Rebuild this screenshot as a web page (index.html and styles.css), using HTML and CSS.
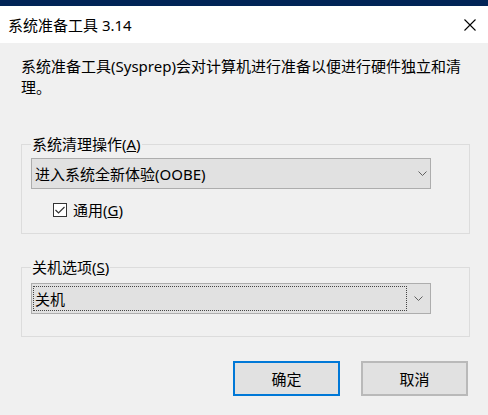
FILE: index.html
```html
<!DOCTYPE html>
<html lang="zh-CN">
<head>
<meta charset="utf-8">
<title>系统准备工具 3.14</title>
<link rel="stylesheet" href="styles.css">
</head>
<body>
<div class="window">
  <div class="topbar"></div>
  <div class="titlebar">
    <span class="title">系统准备工具 3.14</span>
    <svg class="close" width="12" height="12" viewBox="0 0 12 12"><path d="M0.5 0.5 L11.5 11.5 M11.5 0.5 L0.5 11.5" stroke="#000" stroke-width="1.1" fill="none"/></svg>
  </div>
  <div class="content">
    <p class="desc">系统准备工具(Sysprep)会对计算机进行准备以便进行硬件独立和清<br>理。</p>

    <fieldset class="group group-first">
      <legend>系统清理操作(<u>A</u>)</legend>
      <div class="combo">
        <span class="combo-text">进入系统全新体验(OOBE)</span>
        <span class="combo-arrow"><svg width="9" height="5" viewBox="0 0 9 5"><polyline points="0.5,0.5 4.5,4.5 8.5,0.5" fill="none" stroke="#606060" stroke-width="1"/></svg></span>
      </div>
      <label class="check-row">
        <svg class="checkbox" width="14" height="14" viewBox="0 0 14 14"><rect x="0.5" y="0.5" width="13" height="13" fill="#fff" stroke="#333"/><polyline points="2.5,7 5.5,10 11.5,4" fill="none" stroke="#333" stroke-width="1.2"/></svg>
        <span>通用(<u>G</u>)</span>
      </label>
    </fieldset>

    <fieldset class="group group-second">
      <legend>关机选项(<u>S</u>)</legend>
      <div class="combo combo-list">
        <span class="focus-rect">关机</span>
        <span class="combo-arrow arrow-list"><svg width="9" height="5" viewBox="0 0 9 5"><polyline points="0.5,0.5 4.5,4.5 8.5,0.5" fill="none" stroke="#606060" stroke-width="1"/></svg></span>
      </div>
    </fieldset>

    <div class="buttons">
      <button class="btn btn-default">确定</button>
      <button class="btn">取消</button>
    </div>
  </div>
</div>
</body>
</html>
```

FILE: styles.css
```css
html, body {
  margin: 0;
  padding: 0;
}
body {
  width: 488px;
  height: 415px;
  overflow: hidden;
  background: #f0f0f0;
  font-family: "Noto Sans", "Noto Sans CJK SC", sans-serif;
  font-size: 15px;
  color: #000;
}
.topbar {
  height: 6px;
  background: #012456;
}
.titlebar {
  height: 37px;
  background: #fff;
  display: flex;
  align-items: center;
  justify-content: space-between;
  padding: 0 12px 0 8px;
}
.title {
  line-height: 20px;
}
.close {
  display: block;
}
.content {
  padding: 13px 18px 0 21px;
}
.desc {
  margin: 0;
  line-height: 21px;
  white-space: nowrap;
}
.group {
  margin: 0;
  border: 1px solid #dcdcdc;
  padding: 4px 0 13px 9px;
  min-width: 0;
}
.group-first {
  margin-top: 36px;
}
.group-second {
  margin-top: 23px;
  padding-top: 6px;
  padding-bottom: 22px;
}
.group legend {
  margin-left: 0;
  padding: 0 1px;
  line-height: 20px;
}
.combo {
  width: 400px;
  height: 31px;
  box-sizing: border-box;
  border: 1px solid #adadad;
  background: #e1e1e1;
  display: flex;
  align-items: center;
}
.combo-text {
  flex: 1;
  padding-left: 3px;
  line-height: 20px;
}
.combo-arrow {
  width: 16px;
  display: flex;
  justify-content: center;
}
.combo-arrow svg {
  display: block;
}
.focus-rect {
  margin-left: 1px;
  width: 374px;
  height: 25px;
  box-sizing: border-box;
  border: 1px dotted #444;
  padding-left: 1px;
  display: flex;
  align-items: center;
  line-height: 20px;
}
.arrow-list {
  flex: 1;
  width: auto;
}
.check-row {
  display: flex;
  align-items: center;
  gap: 6px;
  margin: 11px 0 0 22px;
  line-height: 20px;
}
.checkbox {
  display: block;
}
.buttons {
  display: flex;
  justify-content: flex-end;
  gap: 21px;
  margin-top: 24px;
  padding-right: 2px;
}
.btn {
  width: 107px;
  height: 35px;
  box-sizing: border-box;
  border: 2px solid #b9b9b9;
  background: #e1e1e1;
  font-family: inherit;
  font-size: 15px;
  color: #000;
  padding: 0;
}
.btn-default {
  border-color: #0078d7;
}
```
